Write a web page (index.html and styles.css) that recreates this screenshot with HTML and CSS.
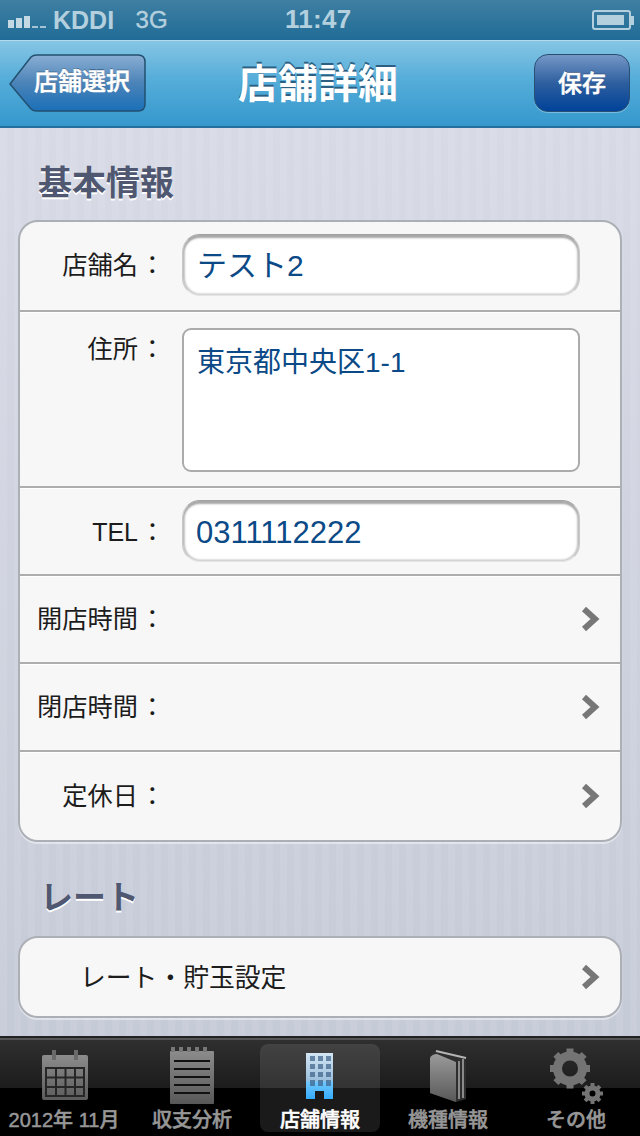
FILE: index.html
```html
<!DOCTYPE html>
<html lang="ja">
<head>
<meta charset="utf-8">
<title>店舗詳細</title>
<link rel="stylesheet" href="styles.css">
</head>
<body>
<div class="phone">
  <div class="status">
    <div class="status-left">
      <span class="signal"><i class="b1"></i><i class="b2"></i><i class="b3"></i><i class="b4"></i><i class="b5"></i></span>
      <span class="carrier">KDDI</span>
      <span class="net">3G</span>
    </div>
    <div class="clock">11:47</div>
    <div class="battery"><span class="batt-body"><span class="batt-fill"></span></span><span class="batt-tip"></span></div>
  </div>
  <header class="navbar">
    <button class="back">
      <svg class="back-shape" width="138" height="60" viewBox="0 0 138 60"><defs><linearGradient id="bk" x1="0" y1="0" x2="0" y2="1"><stop offset="0" stop-color="#8aaed3"/><stop offset="0.5" stop-color="#4b83b8"/><stop offset="1" stop-color="#1a70b8"/></linearGradient></defs><path d="M1 30 L22 3 Q24 1 28 1 L129 1 Q136 1 136 8 L136 50 Q136 57 129 57 L28 57 Q24 57 22 55 Z" fill="url(#bk)" stroke="#23506f" stroke-width="1.5"/></svg>
      <span class="back-label">店舗選択</span>
    </button>
    <h1 class="nav-title">店舗詳細</h1>
    <button class="save">保存</button>
  </header>
  <main class="content">
    <h2 class="section">基本情報</h2>
    <section class="card">
      <div class="row row-field">
        <span class="label">店舗名<span class="colon">：</span></span>
        <div class="input"><span>テスト2</span></div>
      </div>
      <div class="row row-area">
        <span class="label">住所<span class="colon">：</span></span>
        <div class="textarea">東京都中央区1-1</div>
      </div>
      <div class="row row-field row-tel">
        <span class="label">TEL<span class="colon">：</span></span>
        <div class="input input-num"><span>0311112222</span></div>
      </div>
      <div class="row row-link">
        <span class="label">開店時間<span class="colon">：</span></span>
        <svg class="chev" width="20" height="26" viewBox="0 0 20 26"><path d="M4 3 L15 13 L4 23" fill="none" stroke="#777" stroke-width="6"/></svg>
      </div>
      <div class="row row-link">
        <span class="label">閉店時間<span class="colon">：</span></span>
        <svg class="chev" width="20" height="26" viewBox="0 0 20 26"><path d="M4 3 L15 13 L4 23" fill="none" stroke="#777" stroke-width="6"/></svg>
      </div>
      <div class="row row-link">
        <span class="label">定休日<span class="colon">：</span></span>
        <svg class="chev" width="20" height="26" viewBox="0 0 20 26"><path d="M4 3 L15 13 L4 23" fill="none" stroke="#777" stroke-width="6"/></svg>
      </div>
    </section>
    <h2 class="section section-rate">レート</h2>
    <section class="card card-rate">
      <div class="row row-rate">
        <span class="rate-label">レート・貯玉設定</span>
        <svg class="chev" width="20" height="26" viewBox="0 0 20 26"><path d="M4 3 L15 13 L4 23" fill="none" stroke="#777" stroke-width="6"/></svg>
      </div>
    </section>
  </main>
  <nav class="tabbar">
    <div class="tab">
      <svg class="tab-icon" width="64" height="60" viewBox="0 0 64 60"><defs><linearGradient id="g1" x1="0" y1="0" x2="0" y2="1"><stop offset="0" stop-color="#8c8c8c"/><stop offset="1" stop-color="#5c5c5c"/></linearGradient></defs>
        <rect x="10" y="9" width="46" height="45" rx="2" fill="url(#g1)"/>
        <rect x="20" y="4" width="4" height="10" fill="#6a6a6a"/><rect x="42" y="4" width="4" height="10" fill="#6a6a6a"/>
        <path d="M14 22H52V50H14Z M24 22V50 M33.500 22V50 M43 22V50 M14 31.500H52 M14 41H52" fill="none" stroke="#262626" stroke-width="2"/>
      </svg>
      <span>2012年 11月</span>
    </div>
    <div class="tab">
      <svg class="tab-icon" width="64" height="60" viewBox="0 0 64 60"><defs><linearGradient id="g2" x1="0" y1="0" x2="0" y2="1"><stop offset="0" stop-color="#8c8c8c"/><stop offset="1" stop-color="#585858"/></linearGradient></defs>
        <rect x="10" y="5" width="44" height="53" rx="1" fill="url(#g2)"/>
        <path d="M11 1h4v5h-4z M19 1h4v5h-4z M27 1h4v5h-4z M35 1h4v5h-4z M43 1h4v5h-4z" fill="#777"/>
        <path d="M14 15H50M14 23H50M14 31H50M14 39H50M14 47H50" stroke="#111" stroke-width="2"/>
      </svg>
      <span>収支分析</span>
    </div>
    <div class="tab tab-on">
      <svg class="tab-icon" width="64" height="60" viewBox="0 0 64 60"><defs><linearGradient id="g3" x1="0" y1="0" x2="0" y2="1"><stop offset="0" stop-color="#d3e6f4"/><stop offset="0.6" stop-color="#9cbfdc"/><stop offset="0.61" stop-color="#74c8fb"/><stop offset="1" stop-color="#35adfd"/></linearGradient></defs>
        <path d="M18 7H45V53H36V45H27V53H18Z" fill="url(#g3)"/>
        <path d="M22 10h5v5h-5z M30 10h5v5h-5z M38 10h5v5h-5z M22 18h5v5h-5z M30 18h5v5h-5z M38 18h5v5h-5z M22 26h5v5h-5z M30 26h5v5h-5z M38 26h5v5h-5z M22 34h5v6h-5z M30 34h5v6h-5z M38 34h5v6h-5z" fill="#3c5f86" opacity=".7"/>
      </svg>
      <span>店舗情報</span>
    </div>
    <div class="tab">
      <svg class="tab-icon" width="64" height="60" viewBox="0 0 64 60"><defs><linearGradient id="g4" x1="0" y1="0" x2="0" y2="1"><stop offset="0" stop-color="#9a9a9a"/><stop offset="1" stop-color="#585858"/></linearGradient></defs>
        <path d="M14 12 Q14 5 21 4 L50 11 L50 53 L40 56 L14 47Z" fill="#2e2e2e"/>
        <path d="M14 12 Q16 8 21 8 L40 16 L40 56 L14 47Z" fill="url(#g4)"/>
        <path d="M43 15V53M47 13V52" stroke="#8a8a8a" stroke-width="2"/>
        <path d="M20 5 L50 12" stroke="#b4b4b4" stroke-width="2"/>
      </svg>
      <span>機種情報</span>
    </div>
    <div class="tab">
      <svg class="tab-icon" width="64" height="60" viewBox="0 0 64 60">
        <g fill="none" stroke="#747474">
          <circle cx="26" cy="22.500" r="12.500" stroke-width="9"/>
          <path d="M26 2.500V42.500M6 22.500H46M11.860 8.360L40.140 36.640M40.140 8.360L11.860 36.640" stroke-width="7" stroke-dasharray="6 28 6"/>
          <circle cx="48.500" cy="47.500" r="5.500" stroke-width="5"/>
          <path d="M48.500 37V58M38 47.500H59M41.080 40.080L55.920 54.920M55.920 40.080L41.080 54.920" stroke-width="4" stroke-dasharray="3.500 14 3.500"/>
        </g>
      </svg>
      <span>その他</span>
    </div>
  </nav>
</div>
</body>
</html>
```
FILE: styles.css
```css
* { box-sizing: border-box; margin: 0; padding: 0; }
html, body { width: 640px; height: 1136px; overflow: hidden; }
body { font-family: "Liberation Sans", "Noto Sans CJK JP", sans-serif; background: #000; }
.phone { width: 640px; height: 1136px; display: flex; flex-direction: column; overflow: hidden; }

.status { height: 40px; flex: none; display: flex; align-items: center; justify-content: space-between; position: relative; padding: 0 6px 0 8px; background: linear-gradient(#3f7fa2, #206c97); color: #b4d0de; font-weight: 700; }
.status-left { display: flex; align-items: center; }
.signal { display: flex; align-items: flex-end; gap: 2px; height: 15px; width: 46px; }
.signal i { display: block; width: 6px; background: #c3d8e3; }
.signal .b1 { height: 8px; } .signal .b2 { height: 10px; } .signal .b3 { height: 12px; }
.signal .b4, .signal .b5 { height: 2px; opacity: .8; }
.carrier { font-size: 25px; margin-left: -1px; }
.net { font-size: 24px; font-weight: 400; margin-left: 21.500px; -webkit-text-stroke: .4px #b4d0de; }
.clock { position: absolute; left: 285px; top: 4px; font-size: 26px; letter-spacing: .3px; }
.battery { display: flex; align-items: center; }
.batt-body { width: 39px; height: 20px; border: 2px solid #b4d0de; border-radius: 3px; padding: 3px; display: block; }
.batt-fill { display: block; width: 27px; height: 10px; background: #b4d0de; }
.batt-tip { width: 3px; height: 9px; background: #b4d0de; }

.navbar { height: 88px; flex: none; position: relative; display: flex; align-items: center; justify-content: center; background: linear-gradient(#86c5e4, #55add9 45%, #3598cd); border-top: 1px solid #b5dcee; border-bottom: 2px solid #25709f; }
.back { position: absolute; left: 9px; top: 13px; width: 138px; height: 60px; border: 0; background: none; color: #fff; font: inherit; }
.back-shape { position: absolute; left: 0; top: 0; }
.back-label { position: absolute; left: 25px; top: 13px; font-size: 24px; line-height: 30px; font-weight: 500; -webkit-text-stroke: .5px #fff; text-shadow: 0 -1px 0 #234b70; white-space: nowrap; }
.nav-title { color: #fff; font-size: 40px; line-height: 48px; font-weight: 700; margin-left: -4px; text-shadow: 0 -2px 0 #2c5f82; }
.save { position: absolute; left: 534px; top: 13px; width: 96px; height: 58px; border: 1.500px solid #2a4f74; border-radius: 14px; color: #fff; font: inherit; font-size: 24px; font-weight: 500; -webkit-text-stroke: .5px #fff; padding-bottom: 4px; background: linear-gradient(#7597c6, #2e5f9f 50%, #004299); text-shadow: 0 -1px 0 #1c3c68; box-shadow: 0 1px 0 rgba(255,255,255,.3); }

.content { flex: 1; min-height: 0; padding: 0 18px; background-color: #d6dae5; background-image: repeating-linear-gradient(90deg, rgba(255,255,255,.035) 0 7px, rgba(0,0,0,.006) 7px 14px), linear-gradient(#d9dce7, #c7ccd9); }
.section { font-size: 34px; line-height: 40px; font-weight: 700; color: #4f5870; padding: 35px 0 0 20px; height: 92px; text-shadow: 0 2px 0 #fff; }
.section-rate { font-size: 33px; padding: 36px 0 0 22px; height: 94px; }
.card { background: #f7f7f7; border: 2px solid #acafb6; border-radius: 20px; overflow: hidden; box-shadow: 0 2px 0 rgba(255,255,255,.45); }
.row { display: flex; align-items: center; position: relative; border-bottom: 2px solid #adadad; }
.row + .row { box-shadow: inset 0 1px 0 #fff; }
.row:last-child { border-bottom: 0; }
.row-field { height: 90px; padding-bottom: 2px; }
.row-tel { height: 88px; padding-bottom: 0; }
.row-area { height: 176px; align-items: flex-start; }
.row-link { height: 88px; justify-content: space-between; padding-right: 20px; }
.label { width: 143px; text-align: right; font-size: 25.200px; color: #1c1c1c; flex: none; line-height: 30px; white-space: nowrap; }
.colon { margin: 0 -2px 0 2px; }
.row-tel .label { font-size: 25px; padding-top: 2px; }
.row-area .label { margin-top: 22px; }
.input { margin-left: 19px; width: 398px; height: 62px; border-radius: 18px; background: #fff; border: 1px solid #c8c8c8; border-top-color: #a2a2a2; border-bottom-color: #e4e4e4; box-shadow: inset 0 3px 2px #a8a8a8, inset 2px 0 2px #c6c6c6, inset -2px 0 2px #c6c6c6, inset 0 -2px 2px #e2e2e2; color: #0b4a86; font-size: 30px; display: flex; align-items: center; padding: 0 0 5px 14px; }
.input-num { font-size: 31px; padding: 4px 0 0 13px; }
.textarea { margin: 16px 0 0 19px; width: 398px; height: 144px; background: #fff; border: 2px solid #ababab; border-radius: 9px; color: #0b4a86; font-size: 28px; line-height: 34px; padding: 16px 0 0 13px; }
.chev { flex: none; }
.card-rate { height: 82px; }
.row-rate { height: 78px; justify-content: space-between; padding: 0 20px 0 60px; }
.rate-label { font-size: 25.800px; color: #1c1c1c; white-space: nowrap; margin-bottom: 3px; }

.tabbar { height: 98px; flex: none; display: grid; grid-template-columns: repeat(5, 128px); padding: 4px 0 4px; background: linear-gradient(#2f2f2f 0, #1c1c1c 48px, #000 48px); border-top: 2px solid #555; box-shadow: 0 -2px 0 #222; }
.tab { display: flex; flex-direction: column; align-items: center; justify-content: flex-end; color: #979797; font-size: 20px; font-weight: 500; -webkit-text-stroke: .5px currentColor; line-height: 24px; border-radius: 8px; margin: 0 4px; white-space: nowrap; }
.tab-icon { flex: none; margin-bottom: 2px; }
.tab-on { color: #fff; background: rgba(255,255,255,.1); }
```
